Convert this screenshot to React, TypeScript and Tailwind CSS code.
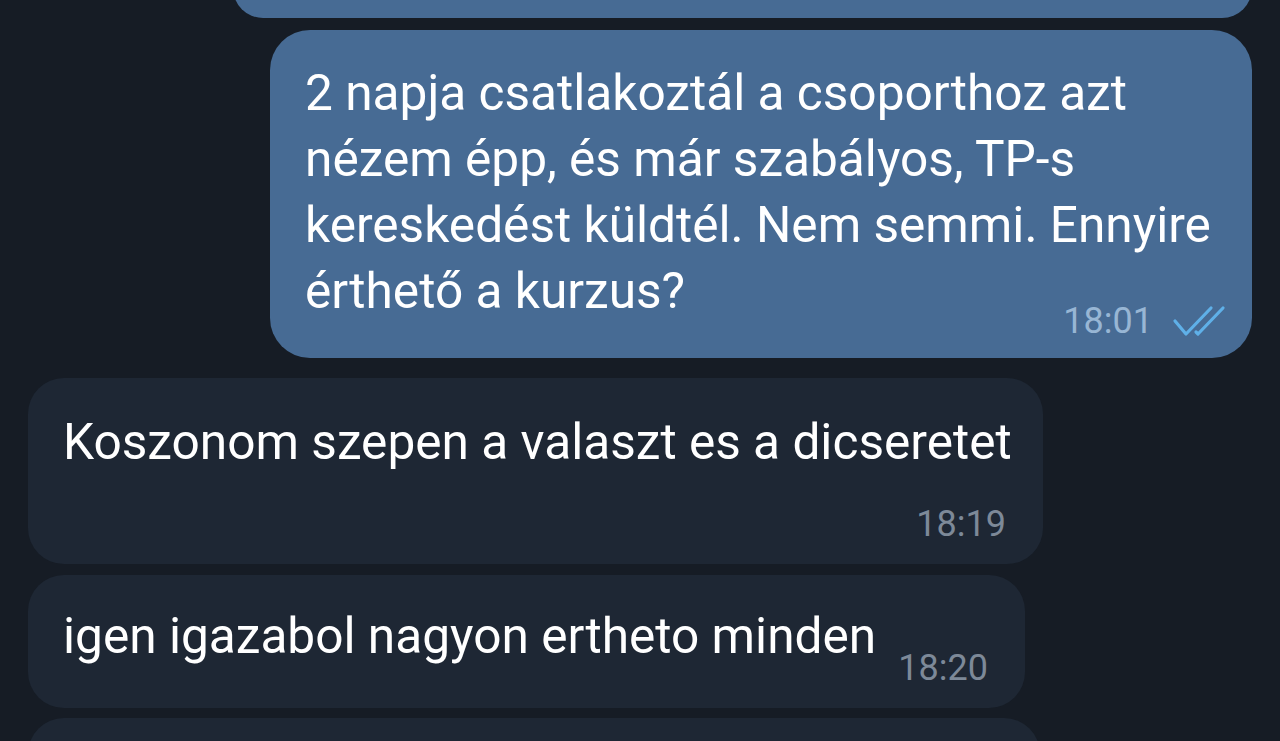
import React from 'react';

function DoubleCheck() {
  return (
    <svg width="56" height="32" viewBox="0 0 56 32" fill="none" stroke="#5fb0e8" strokeWidth="3.2" strokeLinecap="round" strokeLinejoin="round">
      <path d="M4 16 L15 29 L40 3" />
      <path d="M25 27 L27 29 L52 3" />
    </svg>
  );
}

export default function App() {
  return (
    <div
      className="h-[741px] w-[1280px] overflow-hidden bg-[#161c25] px-[28px] flex flex-col"
      style={{ fontFamily: 'Roboto, "Noto Sans", sans-serif' }}
    >
      {/* bubble cut off at the top */}
      <div className="ml-auto -mt-[42px] h-[60px] w-[1019px] shrink-0 rounded-[40px] bg-[#476b94]" />

      {/* outgoing */}
      <div className="ml-auto mt-[12px] w-[982px] shrink-0 rounded-[40px] bg-[#476b94] pl-[35px] pr-[25px] pt-[30px] pb-[19px]">
        <p className="whitespace-nowrap text-[49.6px] leading-[66px] text-white">
          2 napja csatlakoztál a csoporthoz azt
          <br />
          nézem épp, és már szabályos, TP-s
          <br />
          kereskedést küldtél. Nem semmi. Ennyire
          <br />
          érthető a kurzus?
        </p>
        <div className="-mt-[21px] flex items-center justify-end gap-[18px]">
          <span className="text-[36px] leading-[36px] text-[#98b6d4]">18:01</span>
          <DoubleCheck />
        </div>
      </div>

      {/* incoming */}
      <div className="mt-[20px] w-[1015px] shrink-0 rounded-[36px] bg-[#1e2734] pl-[35px] pr-[30px] pt-[31px] pb-[22px]">
        <p className="whitespace-nowrap text-[49.6px] leading-[66px] text-white">Koszonom szepen a valaszt es a dicseretet</p>
        <div className="mt-[31px] flex justify-end pr-[7px]">
          <span className="text-[36px] leading-[36px] text-[#7d8998]">18:19</span>
        </div>
      </div>

      <div className="mt-[11px] w-[997px] shrink-0 rounded-[36px] bg-[#1e2734] pl-[35px] pr-[37px] pt-[28px] pb-[22px]">
        <div className="flex items-start justify-between">
          <span className="shrink-0 whitespace-nowrap text-[49.6px] leading-[66px] text-white">igen igazabol nagyon ertheto minden</span>
          <span className="mt-[47px] ml-[20px] shrink-0 whitespace-nowrap text-[36px] leading-[36px] text-[#7d8998]">18:20</span>
        </div>
      </div>

      <div className="mt-[10px] h-[120px] w-[1012px] shrink-0 rounded-[36px] bg-[#1e2734]" />
    </div>
  );
}
